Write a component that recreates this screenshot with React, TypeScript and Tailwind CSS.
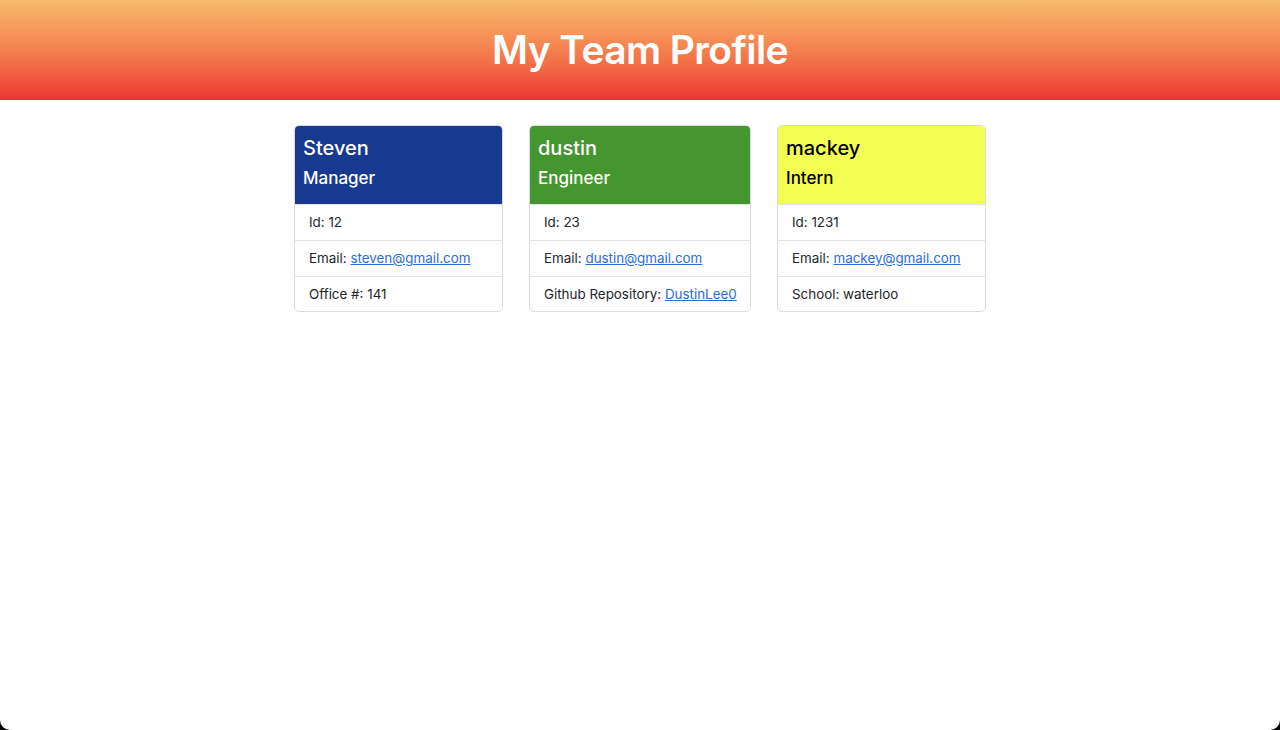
const team = [
  {
    name: "Steven",
    role: "Manager",
    head: "bg-[#173a90] text-white",
    width: "w-[209px]",
    id: "12",
    email: "steven@gmail.com",
    extra: { label: "Office #:", value: "141" },
  },
  {
    name: "dustin",
    role: "Engineer",
    head: "bg-[#44962e] text-white",
    width: "w-[222px]",
    id: "23",
    email: "dustin@gmail.com",
    extra: { label: "Github Repository:", value: "DustinLee0", link: true },
  },
  {
    name: "mackey",
    role: "Intern",
    head: "bg-[#f3fe52] text-black",
    width: "w-[209px]",
    id: "1231",
    email: "mackey@gmail.com",
    extra: { label: "School:", value: "waterloo" },
  },
];

function Card({ member }: { member: (typeof team)[number] }) {
  const { extra } = member;
  return (
    <div
      className={`${member.width} overflow-hidden rounded-[5px] border border-[#dcdcdc] bg-white`}
    >
      <div className={`${member.head} h-[78px] px-[8px] pt-[9px]`}>
        <h2 className="text-[20px] leading-[26px] font-medium">{member.name}</h2>
        <h3 className="mt-[6px] text-[17px] leading-[22px] font-medium">
          {member.role}
        </h3>
      </div>
      <ul className="text-[13.4px] whitespace-nowrap text-[#212529]">
        <li className="h-[36px] border-t border-[#e3e3e3] px-[14px] leading-[35px]">
          Id: {member.id}
        </li>
        <li className="h-[36px] border-t border-[#e3e3e3] px-[14px] leading-[35px]">
          Email:{" "}
          <a href="#" className="text-[#2c6cdc] underline">
            {member.email}
          </a>
        </li>
        <li className="h-[35px] border-t border-[#e3e3e3] px-[14px] leading-[34px]">
          {extra.label}{" "}
          {extra.link ? (
            <a href="#" className="text-[#2c6cdc] underline">
              {extra.value}
            </a>
          ) : (
            extra.value
          )}
        </li>
      </ul>
    </div>
  );
}

export default function App() {
  return (
    <div className="h-[730px] bg-black font-['Inter','Liberation_Sans',sans-serif]">
      <div className="h-full overflow-hidden rounded-b-[10px] bg-white">
        <header className="flex h-[100px] items-center justify-center bg-gradient-to-b from-[#f6bb6c] to-[#ea3232]">
          <h1 className="text-[39px] font-semibold tracking-[-0.6px] text-white">
            My Team Profile
          </h1>
        </header>
        <main className="flex items-start justify-center gap-[26px] pt-[25px]">
          {team.map((m) => (
            <Card key={m.name} member={m} />
          ))}
        </main>
      </div>
    </div>
  );
}
